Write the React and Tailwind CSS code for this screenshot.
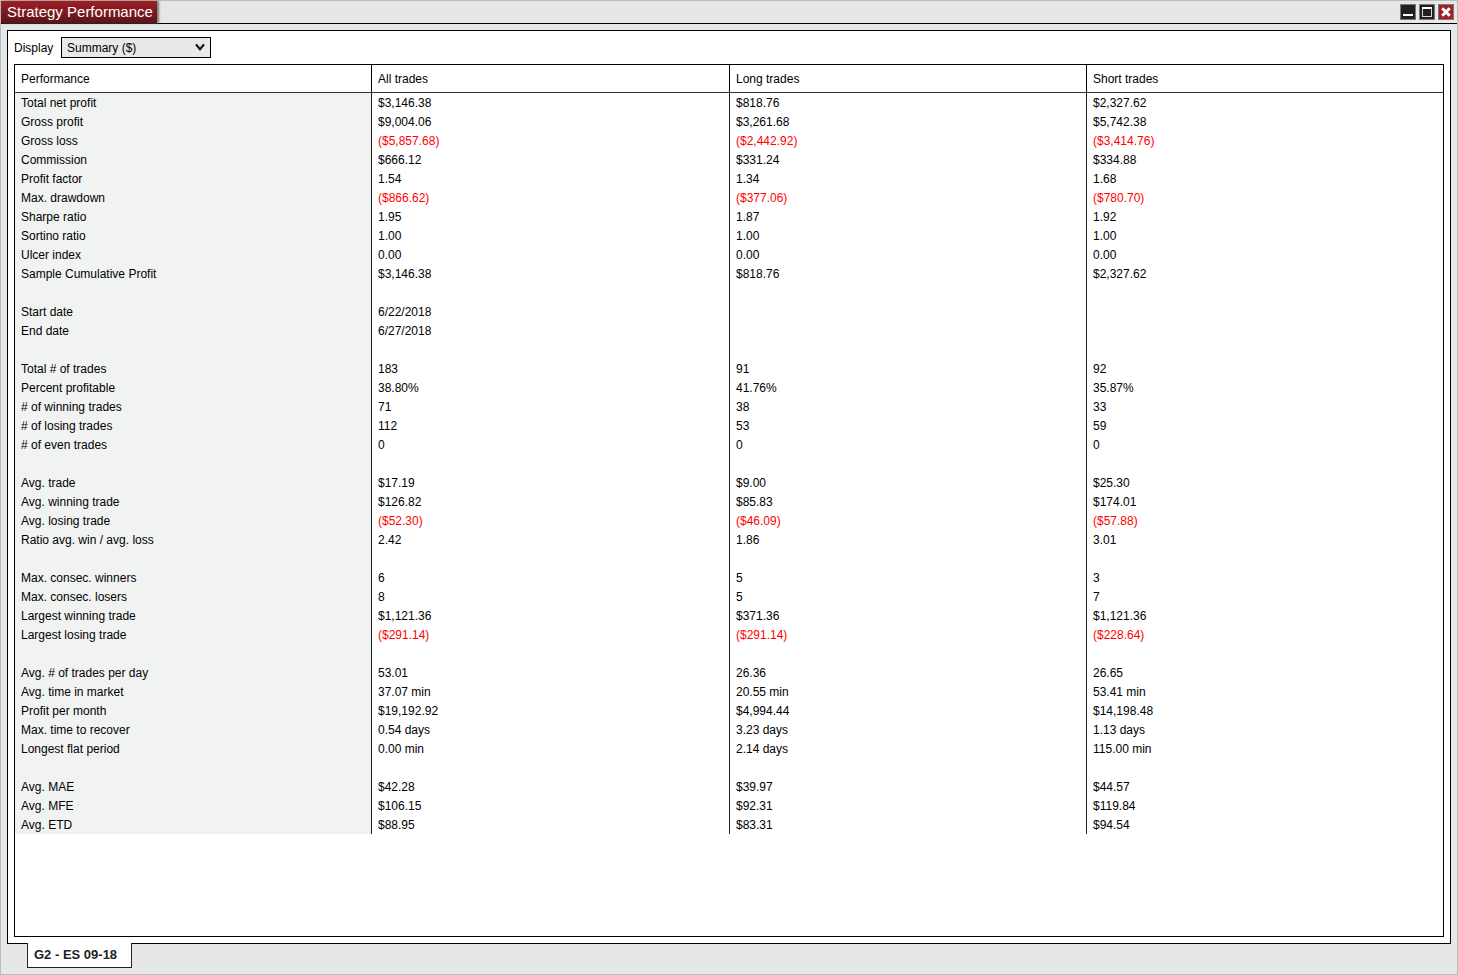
import React, { useState } from 'react'

const COLUMNS = ['Performance', 'All trades', 'Long trades', 'Short trades']

// the label column draws its own right edge, the last two draw their left one
const EDGES = ['border-r', '', 'border-l', 'border-l']

// an empty array is a spacer row
const ROWS = [
  ['Total net profit', '$3,146.38', '$818.76', '$2,327.62'],
  ['Gross profit', '$9,004.06', '$3,261.68', '$5,742.38'],
  ['Gross loss', '($5,857.68)', '($2,442.92)', '($3,414.76)'],
  ['Commission', '$666.12', '$331.24', '$334.88'],
  ['Profit factor', '1.54', '1.34', '1.68'],
  ['Max. drawdown', '($866.62)', '($377.06)', '($780.70)'],
  ['Sharpe ratio', '1.95', '1.87', '1.92'],
  ['Sortino ratio', '1.00', '1.00', '1.00'],
  ['Ulcer index', '0.00', '0.00', '0.00'],
  ['Sample Cumulative Profit', '$3,146.38', '$818.76', '$2,327.62'],
  [],
  ['Start date', '6/22/2018', '', ''],
  ['End date', '6/27/2018', '', ''],
  [],
  ['Total # of trades', '183', '91', '92'],
  ['Percent profitable', '38.80%', '41.76%', '35.87%'],
  ['# of winning trades', '71', '38', '33'],
  ['# of losing trades', '112', '53', '59'],
  ['# of even trades', '0', '0', '0'],
  [],
  ['Avg. trade', '$17.19', '$9.00', '$25.30'],
  ['Avg. winning trade', '$126.82', '$85.83', '$174.01'],
  ['Avg. losing trade', '($52.30)', '($46.09)', '($57.88)'],
  ['Ratio avg. win / avg. loss', '2.42', '1.86', '3.01'],
  [],
  ['Max. consec. winners', '6', '5', '3'],
  ['Max. consec. losers', '8', '5', '7'],
  ['Largest winning trade', '$1,121.36', '$371.36', '$1,121.36'],
  ['Largest losing trade', '($291.14)', '($291.14)', '($228.64)'],
  [],
  ['Avg. # of trades per day', '53.01', '26.36', '26.65'],
  ['Avg. time in market', '37.07 min', '20.55 min', '53.41 min'],
  ['Profit per month', '$19,192.92', '$4,994.44', '$14,198.48'],
  ['Max. time to recover', '0.54 days', '3.23 days', '1.13 days'],
  ['Longest flat period', '0.00 min', '2.14 days', '115.00 min'],
  [],
  ['Avg. MAE', '$42.28', '$39.97', '$44.57'],
  ['Avg. MFE', '$106.15', '$92.31', '$119.84'],
  ['Avg. ETD', '$88.95', '$83.31', '$94.54'],
]

function WindowButton({ label, className, children }) {
  return (
    <button
      type="button"
      aria-label={label}
      className={`size-4 border border-[#77787b] ${className}`}
    >
      <svg className="block size-3.5" viewBox="0 0 14 14" shapeRendering="crispEdges">
        {children}
      </svg>
    </button>
  )
}

function TitleBar() {
  return (
    <header className="flex justify-between border-b border-black">
      <h1 className="h-[22px] bg-linear-to-b from-[#a01e24] to-[#5c1418] pr-1 pl-1.5 text-[15px] leading-[22px] text-white shadow-[2px_0_2px_#77787b]">
        Strategy Performance
      </h1>
      <div className="flex gap-[3px] pt-[3px] pr-[3px]">
        <WindowButton label="Minimize" className="bg-[#231f20]">
          <rect x="2" y="9" width="10" height="2" fill="#fff" />
        </WindowButton>
        <WindowButton label="Maximize" className="bg-[#231f20]">
          <rect x="2" y="2" width="10" height="2" fill="#fff" />
          <path d="M2.5 4v7.5h9V4" fill="none" stroke="#d8d8d8" />
        </WindowButton>
        <WindowButton label="Close" className="bg-[#a51e24]">
          <path
            d="M4.3 4.3l5.4 5.4M9.7 4.3l-5.4 5.4"
            stroke="#fff"
            strokeWidth="3"
            strokeLinecap="square"
            shapeRendering="auto"
          />
        </WindowButton>
      </div>
    </header>
  )
}

function DisplaySelect() {
  const [display, setDisplay] = useState('summary')

  return (
    <div className="flex items-center">
      <label htmlFor="display" className="w-[47px]">Display</label>
      <div className="relative">
        <select
          id="display"
          value={display}
          onChange={(e) => setDisplay(e.target.value)}
          className="block h-[21px] w-[150px] appearance-none border border-black bg-[#e8e9e8] pr-5 pl-[5px]"
        >
          <option value="summary">Summary ($)</option>
        </select>
        <svg
          className="pointer-events-none absolute top-[6px] right-[6px] h-2 w-[10px]"
          viewBox="0 0 10 8"
          fill="none"
        >
          <path d="M1 1.4l4 4.8 4-4.8" stroke="#111" strokeWidth="2.2" />
        </svg>
      </div>
    </div>
  )
}

function PerformanceTable() {
  return (
    <table className="w-full table-fixed border-separate border-spacing-0 text-left">
      <thead>
        <tr>
          {COLUMNS.map((name, i) => (
            <th
              key={name}
              scope="col"
              className={`h-7 border-x-black border-b border-b-[#333] px-1.5 font-normal ${EDGES[i]}`}
            >
              {name}
            </th>
          ))}
        </tr>
      </thead>
      <tbody>
        {ROWS.map(([name, ...values], i) => (
          <tr key={i}>
            <th
              scope="row"
              className={`h-[19px] border-[#222] bg-[#f1f3f2] px-1.5 font-normal ${EDGES[0]}`}
            >
              {name}
            </th>
            {[0, 1, 2].map((col) => {
              const value = values[col] ?? ''
              return (
                <td
                  key={col}
                  className={`h-[19px] border-[#222] px-1.5 ${EDGES[col + 1]} ${value.startsWith('(') ? 'text-[#ff0000]' : ''}`}
                >
                  {value}
                </td>
              )
            })}
          </tr>
        ))}
      </tbody>
    </table>
  )
}

export default function App() {
  return (
    <div className="flex min-h-screen flex-col border border-[#bbbcbe] bg-[#e6e7e9] font-['Liberation_Sans',Arial,sans-serif] text-[12px] leading-[18px] text-black">
      <TitleBar />
      <main className="flex flex-1 flex-col p-1.5">
        <section className="flex flex-1 flex-col gap-1.5 border border-black bg-white p-1.5">
          <DisplaySelect />
          <div className="flex-1 border border-black">
            <PerformanceTable />
          </div>
        </section>
        {/* the tab covers the panel's bottom border so that the two join */}
        <nav className="z-10 -mt-px flex pl-5">
          <button
            type="button"
            className="h-[25px] w-[105px] border border-t-0 border-[#222] bg-white px-1.5 text-left text-[13px] font-bold text-[#222]"
          >
            G2 - ES 09-18
          </button>
        </nav>
      </main>
    </div>
  )
}
